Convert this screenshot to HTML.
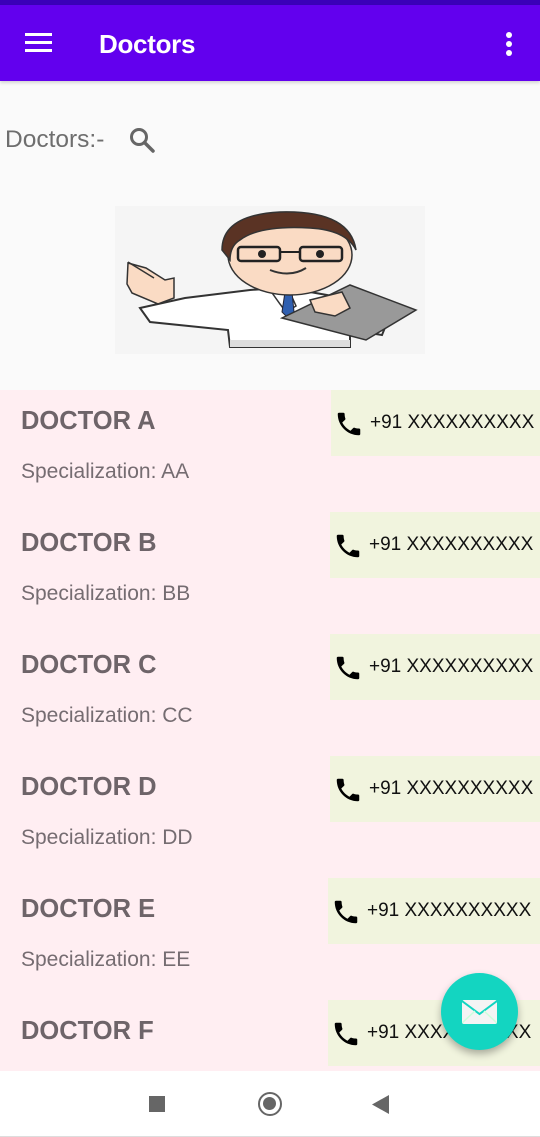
<!DOCTYPE html>
<html><head><style>
*{margin:0;padding:0;box-sizing:border-box}
body{width:540px;height:1137px;overflow:hidden;background:#fafafa;font-family:"Liberation Sans",Roboto,sans-serif;position:relative}
.status{position:absolute;top:0;left:0;width:540px;height:5px;background:#3a00b8}
.bar{position:absolute;top:5px;left:0;width:540px;height:76px;background:#6200ee;box-shadow:0 2px 3px rgba(0,0,0,.15)}
.bar .t{position:absolute;left:99px;top:24px;color:#fff;font-size:26px;font-weight:bold;letter-spacing:-0.3px}
.list{position:absolute;top:390px;left:0;width:540px;height:681px;background:#ffeef2;overflow:hidden}
.row{position:absolute;left:0;width:540px;height:122px}
.name{position:absolute;left:21px;top:17px;font-size:25.5px;font-weight:bold;color:#6e6469}
.spec{position:absolute;left:21px;top:70px;font-size:21px;color:#756c71}
.ph{position:absolute;right:0;top:0;height:66px;background:#f1f4de;font-size:19px;color:#111}
.ph svg{position:absolute;left:3px;top:19px}
.ph span{position:absolute;left:39px;top:22px;white-space:nowrap}
.nav{position:absolute;top:1071px;left:0;width:540px;height:66px;background:#fff;border-bottom:1px solid #ddd}
.fab{position:absolute;left:441px;top:973px;width:77px;height:77px;border-radius:50%;background:#13d5c1;box-shadow:0 4px 8px rgba(0,0,0,.3)}
</style></head><body>
<div class="status"></div>
<div class="bar">
<svg style="position:absolute;left:25px;top:28px" width="27" height="20"><rect y="0" width="27" height="3" fill="#fff"/><rect y="8" width="27" height="3" fill="#fff"/><rect y="16" width="27" height="3" fill="#fff"/></svg>
<div class="t">Doctors</div>
<svg style="position:absolute;left:504px;top:26px" width="10" height="26"><circle cx="5" cy="4" r="3" fill="#fff"/><circle cx="5" cy="13" r="3" fill="#fff"/><circle cx="5" cy="22" r="3" fill="#fff"/></svg>
</div>
<div style="position:absolute;left:5px;top:126px;font-size:24.5px;color:#6e6e6e">Doctors:-</div>
<svg style="position:absolute;left:128px;top:126px" width="28" height="28" viewBox="0 0 28 28"><circle cx="11" cy="11" r="7.5" fill="none" stroke="#666" stroke-width="3"/><line x1="16.5" y1="16.5" x2="25" y2="25" stroke="#666" stroke-width="3.5" stroke-linecap="round"/></svg>
<svg style="position:absolute;left:110px;top:200px" width="320" height="160" viewBox="0 0 320 160">
<rect x="5" y="6" width="310" height="148" fill="#f5f5f5"/>
<path d="M30 108 L75 98 L140 90 L170 88 L200 92 L245 100 L278 120 L272 135 L240 130 L240 147 L120 147 L118 130 L40 122 Z" fill="#fff" stroke="#333" stroke-width="2"/>
<path d="M120 140 L240 140 L240 147 L120 147Z" fill="#ddd"/>
<path d="M160 90 L178 88 L186 106 L176 112 L170 104Z" fill="#fff" stroke="#333" stroke-width="1.5"/>
<path d="M175 92 L182 92 L184 112 L178 118 L172 112Z" fill="#2f5fb0" stroke="#223" stroke-width="1"/>
<path d="M240 85 L306 110 L256 140 L172 118 Z" fill="#999" stroke="#333" stroke-width="1.5"/>
<path d="M200 100 L232 92 L240 108 L225 116 L205 112Z" fill="#fadbc4" stroke="#333" stroke-width="1.5"/>
<path d="M18 63 L36 68 L55 80 L64 78 L64 98 L48 104 L22 93 L17 84Z" fill="#fadbc4" stroke="#333" stroke-width="1.5"/>
<path d="M18 62 L44 78" stroke="#333" stroke-width="1.5"/>
<ellipse cx="180" cy="55" rx="62" ry="40" fill="#fadbc4" stroke="#333" stroke-width="1.5"/>
<path d="M112 50 Q112 15 170 12 Q240 10 246 50 Q236 30 200 28 Q150 25 130 40 Q120 46 120 60Z" fill="#5a3324" stroke="#333" stroke-width="1.5"/>
<rect x="128" y="47" width="42" height="14" rx="3" fill="none" stroke="#222" stroke-width="2.5"/>
<rect x="190" y="47" width="42" height="14" rx="3" fill="none" stroke="#222" stroke-width="2.5"/>
<line x1="170" y1="52" x2="190" y2="52" stroke="#222" stroke-width="2"/>
<circle cx="152" cy="54" r="4" fill="#222"/><circle cx="210" cy="54" r="4" fill="#222"/>
<path d="M160 70 Q180 78 196 68" fill="none" stroke="#333" stroke-width="2"/>
</svg>
<div class="list">
<div class="row" style="top:0"><div class="name">DOCTOR A</div><div class="spec">Specialization: AA</div><div class="ph" style="width:209px"><svg width="30" height="30" viewBox="0 0 24 24"><path d="M6.6 10.8c1.4 2.8 3.8 5.1 6.6 6.6l2.2-2.2c.3-.3.7-.4 1-.2 1.1.4 2.3.6 3.6.6.6 0 1 .4 1 1V20c0 .6-.4 1-1 1C10.6 21 3 13.4 3 4c0-.6.4-1 1-1h3.5c.6 0 1 .4 1 1 0 1.3.2 2.5.6 3.6.1.3 0 .7-.2 1L6.6 10.8z"/></svg><span>+91 XXXXXXXXXX</span></div></div>
<div class="row" style="top:122px"><div class="name">DOCTOR B</div><div class="spec">Specialization: BB</div><div class="ph" style="width:210px"><svg width="30" height="30" viewBox="0 0 24 24"><path d="M6.6 10.8c1.4 2.8 3.8 5.1 6.6 6.6l2.2-2.2c.3-.3.7-.4 1-.2 1.1.4 2.3.6 3.6.6.6 0 1 .4 1 1V20c0 .6-.4 1-1 1C10.6 21 3 13.4 3 4c0-.6.4-1 1-1h3.5c.6 0 1 .4 1 1 0 1.3.2 2.5.6 3.6.1.3 0 .7-.2 1L6.6 10.8z"/></svg><span>+91 XXXXXXXXXX</span></div></div>
<div class="row" style="top:244px"><div class="name">DOCTOR C</div><div class="spec">Specialization: CC</div><div class="ph" style="width:210px"><svg width="30" height="30" viewBox="0 0 24 24"><path d="M6.6 10.8c1.4 2.8 3.8 5.1 6.6 6.6l2.2-2.2c.3-.3.7-.4 1-.2 1.1.4 2.3.6 3.6.6.6 0 1 .4 1 1V20c0 .6-.4 1-1 1C10.6 21 3 13.4 3 4c0-.6.4-1 1-1h3.5c.6 0 1 .4 1 1 0 1.3.2 2.5.6 3.6.1.3 0 .7-.2 1L6.6 10.8z"/></svg><span>+91 XXXXXXXXXX</span></div></div>
<div class="row" style="top:366px"><div class="name">DOCTOR D</div><div class="spec">Specialization: DD</div><div class="ph" style="width:210px"><svg width="30" height="30" viewBox="0 0 24 24"><path d="M6.6 10.8c1.4 2.8 3.8 5.1 6.6 6.6l2.2-2.2c.3-.3.7-.4 1-.2 1.1.4 2.3.6 3.6.6.6 0 1 .4 1 1V20c0 .6-.4 1-1 1C10.6 21 3 13.4 3 4c0-.6.4-1 1-1h3.5c.6 0 1 .4 1 1 0 1.3.2 2.5.6 3.6.1.3 0 .7-.2 1L6.6 10.8z"/></svg><span>+91 XXXXXXXXXX</span></div></div>
<div class="row" style="top:488px"><div class="name">DOCTOR E</div><div class="spec">Specialization: EE</div><div class="ph" style="width:212px"><svg width="30" height="30" viewBox="0 0 24 24"><path d="M6.6 10.8c1.4 2.8 3.8 5.1 6.6 6.6l2.2-2.2c.3-.3.7-.4 1-.2 1.1.4 2.3.6 3.6.6.6 0 1 .4 1 1V20c0 .6-.4 1-1 1C10.6 21 3 13.4 3 4c0-.6.4-1 1-1h3.5c.6 0 1 .4 1 1 0 1.3.2 2.5.6 3.6.1.3 0 .7-.2 1L6.6 10.8z"/></svg><span>+91 XXXXXXXXXX</span></div></div>
<div class="row" style="top:610px"><div class="name">DOCTOR F</div><div class="ph" style="width:212px"><svg width="30" height="30" viewBox="0 0 24 24"><path d="M6.6 10.8c1.4 2.8 3.8 5.1 6.6 6.6l2.2-2.2c.3-.3.7-.4 1-.2 1.1.4 2.3.6 3.6.6.6 0 1 .4 1 1V20c0 .6-.4 1-1 1C10.6 21 3 13.4 3 4c0-.6.4-1 1-1h3.5c.6 0 1 .4 1 1 0 1.3.2 2.5.6 3.6.1.3 0 .7-.2 1L6.6 10.8z"/></svg><span>+91 XXXXXXXXXX</span></div></div>
</div>
<div class="fab"><svg style="position:absolute;left:21px;top:27px" width="35" height="24" viewBox="0 0 35 24"><rect x="0" y="0" width="35" height="24" rx="2" fill="#f4f4f4"/><path d="M0 1 L17.5 14 L35 1" fill="none" stroke="#13d5c1" stroke-width="2"/><path d="M0 23 L13 11 M35 23 L22 11" stroke="#cfd" stroke-width="1.5"/></svg></div>
<div class="nav">
<div style="position:absolute;left:149px;top:25px;width:16px;height:16px;background:#666"></div>
<div style="position:absolute;left:258px;top:21px;width:24px;height:24px;border-radius:50%;border:2.5px solid #666"><div style="position:absolute;left:3px;top:3px;width:13px;height:13px;border-radius:50%;background:#666"></div></div>
<svg style="position:absolute;left:372px;top:24px" width="17" height="19"><path d="M17 0 L17 19 L0 9.5Z" fill="#666"/></svg>
</div>
</body></html>
